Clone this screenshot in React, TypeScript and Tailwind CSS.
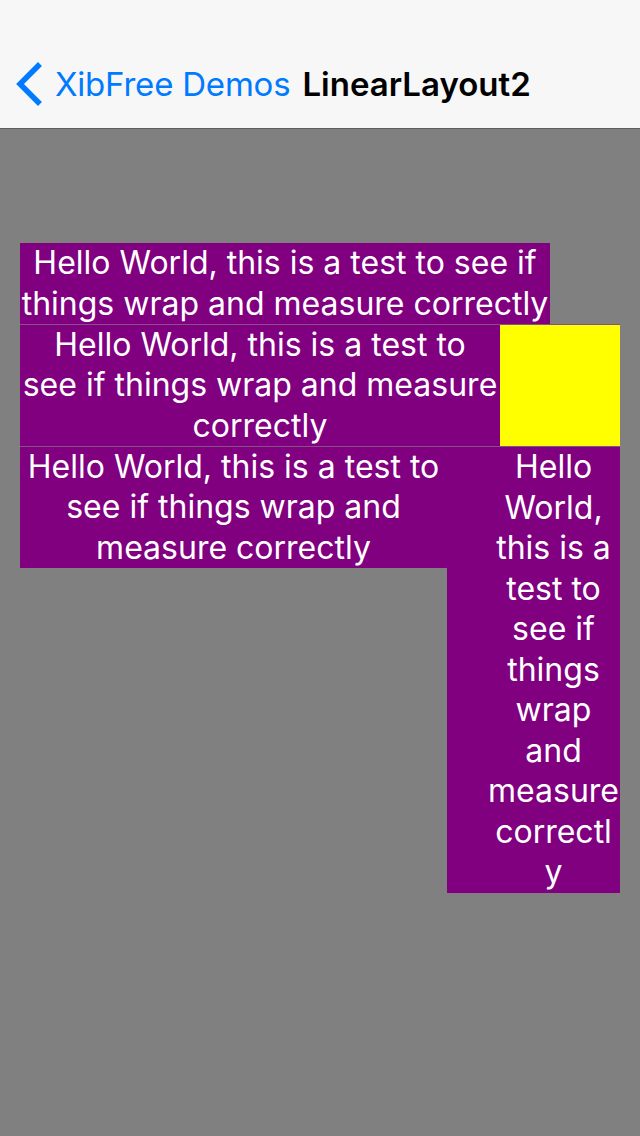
import React from "react";

const font = { fontFamily: "Inter, 'Noto Sans', sans-serif" };

function Lines({ lines }: { lines: string[] }) {
  return (
    <>
      {lines.map((l, i) => (
        <div key={i} className="whitespace-nowrap">
          {l}
        </div>
      ))}
    </>
  );
}

export default function App() {
  return (
    <div className="w-[640px] h-[1136px] bg-[#808080] flex flex-col overflow-hidden" style={font}>
      <div className="h-[129px] bg-[#f7f7f7] border-b border-[#5e5e5e] flex items-end pb-[22px] shrink-0">
        <div className="flex items-center">
          <svg width="40" height="44" viewBox="0 0 40 44" className="ml-[12px]">
            <path d="M26 4 L8 22 L26 40" fill="none" stroke="#007aff" strokeWidth="5.5" strokeLinecap="square" />
          </svg>
          <span className="ml-[3px] text-[#007aff] text-[33px] leading-[40px] tracking-[-0.2px]">XibFree Demos</span>
          <span className="ml-[12px] text-black text-[33px] leading-[40px] font-semibold">LinearLayout2</span>
        </div>
      </div>
      <div className="pt-[114px] pl-[20px] text-white text-[32px] leading-[40.5px] text-center">
        <div className="w-[530px] h-[81px] bg-[#800080] flex flex-col justify-center">
          <Lines lines={["Hello World, this is a test to see if", "things wrap and measure correctly"]} />
        </div>
        <div className="w-[600px] h-px bg-[#87508a]" />
        <div className="w-[600px] h-[121px] flex">
          <div className="w-[480px] bg-[#800080] flex flex-col justify-center">
            <Lines lines={["Hello World, this is a test to", "see if things wrap and measure", "correctly"]} />
          </div>
          <div className="w-[120px] bg-[#ffff00]" />
        </div>
        <div className="w-[600px] h-px bg-[#87508a]" />
        <div className="w-[600px] flex items-start">
          <div className="w-[427px] h-[121px] bg-[#800080] flex flex-col justify-center">
            <Lines lines={["Hello World, this is a test to", "see if things wrap and", "measure correctly"]} />
          </div>
          <div className="w-[173px] h-[446px] bg-[#800080] pl-[40px] flex flex-col justify-center">
            <Lines
              lines={["Hello", "World,", "this is a", "test to", "see if", "things", "wrap", "and", "measure", "correctl", "y"]}
            />
          </div>
        </div>
      </div>
    </div>
  );
}
